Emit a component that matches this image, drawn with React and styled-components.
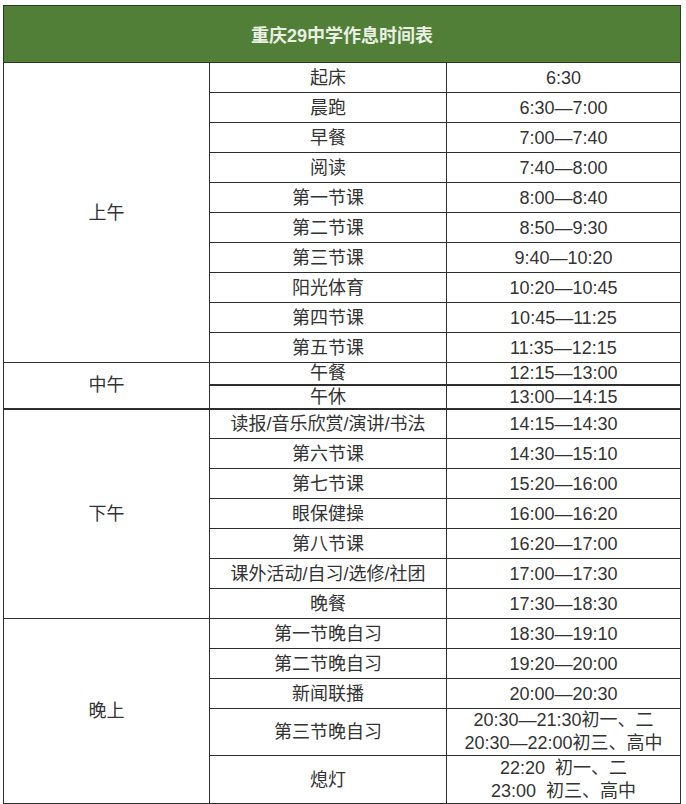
import React from "react";
import styled, { createGlobalStyle } from "styled-components";

const Global = createGlobalStyle`
  html, body { margin: 0; padding: 0; background: #ffffff; }
  body { font-family: "Liberation Sans", "Noto Sans CJK SC", sans-serif; }
`;

const Page = styled.div`
  padding: 5px 0 0 3px;
  width: 686px;
  box-sizing: border-box;
`;

const Table = styled.table`
  width: 678px;
  border-collapse: collapse;
  table-layout: fixed;
  color: #333333;
  font-size: 18px;
`;

const HeadCell = styled.th`
  height: 56px;
  padding: 0;
  background: #517f38;
  color: #e9efe3;
  font-size: 18px;
  font-weight: 600;
  border: 1px solid #2a3a22;
  text-align: center;
  vertical-align: middle;
`;

const Row = styled.tr`
  height: ${(p) => p.$h || 30}px;
`;

const Cell = styled.td`
  padding: 0;
  text-align: center;
  vertical-align: ${(p) => p.$valign || "middle"};
  line-height: ${(p) => (p.$multi ? "23px" : "20px")};
  border: 1px solid #2e2e2e;
  border-top-width: ${(p) => p.$top || 1}px;
  white-space: nowrap;
`;

const Line = styled.div`
  white-space: pre;
`;

const sections = [
  {
    name: "上午",
    rows: [
      ["起床", "6:30"],
      ["晨跑", "6:30—7:00"],
      ["早餐", "7:00—7:40"],
      ["阅读", "7:40—8:00"],
      ["第一节课", "8:00—8:40"],
      ["第二节课", "8:50—9:30"],
      ["第三节课", "9:40—10:20"],
      ["阳光体育", "10:20—10:45"],
      ["第四节课", "10:45—11:25"],
      ["第五节课", "11:35—12:15"],
    ],
  },
  {
    name: "中午",
    rows: [
      ["午餐", "12:15—13:00", 22, 1, "bottom"],
      ["午休", "13:00—14:15", 24, 2, "bottom"],
    ],
  },
  {
    name: "下午",
    top: 2,
    rows: [
      ["读报/音乐欣赏/演讲/书法", "14:15—14:30"],
      ["第六节课", "14:30—15:10"],
      ["第七节课", "15:20—16:00"],
      ["眼保健操", "16:00—16:20"],
      ["第八节课", "16:20—17:00"],
      ["课外活动/自习/选修/社团", "17:00—17:30"],
      ["晚餐", "17:30—18:30"],
    ],
  },
  {
    name: "晚上",
    rows: [
      ["第一节晚自习", "18:30—19:10"],
      ["第二节晚自习", "19:20—20:00"],
      ["新闻联播", "20:00—20:30"],
      ["第三节晚自习", ["20:30—21:30初一、二", "20:30—22:00初三、高中"], 47],
      ["熄灯", ["22:20  初一、二", "23:00  初三、高中"], 48],
    ],
  },
];

export default function App() {
  return (
    <Page>
      <Global />
      <Table>
        <colgroup>
          <col style={{ width: 206 }} />
          <col style={{ width: 237 }} />
          <col />
        </colgroup>
        <thead>
          <tr>
            <HeadCell colSpan={3}>重庆29中学作息时间表</HeadCell>
          </tr>
        </thead>
        <tbody>
          {sections.map((s) =>
            s.rows.map(([act, time, h, top, valign], i) => (
              <Row key={s.name + i} $h={h}>
                {i === 0 && (
                  <Cell rowSpan={s.rows.length} $top={s.top}>
                    {s.name}
                  </Cell>
                )}
                <Cell $top={i === 0 ? s.top : top}>{act}</Cell>
                <Cell $top={i === 0 ? s.top : top} $multi={Array.isArray(time)}>
                  {Array.isArray(time)
                    ? time.map((t) => <Line key={t}>{t}</Line>)
                    : time}
                </Cell>
              </Row>
            ))
          )}
        </tbody>
      </Table>
    </Page>
  );
}
